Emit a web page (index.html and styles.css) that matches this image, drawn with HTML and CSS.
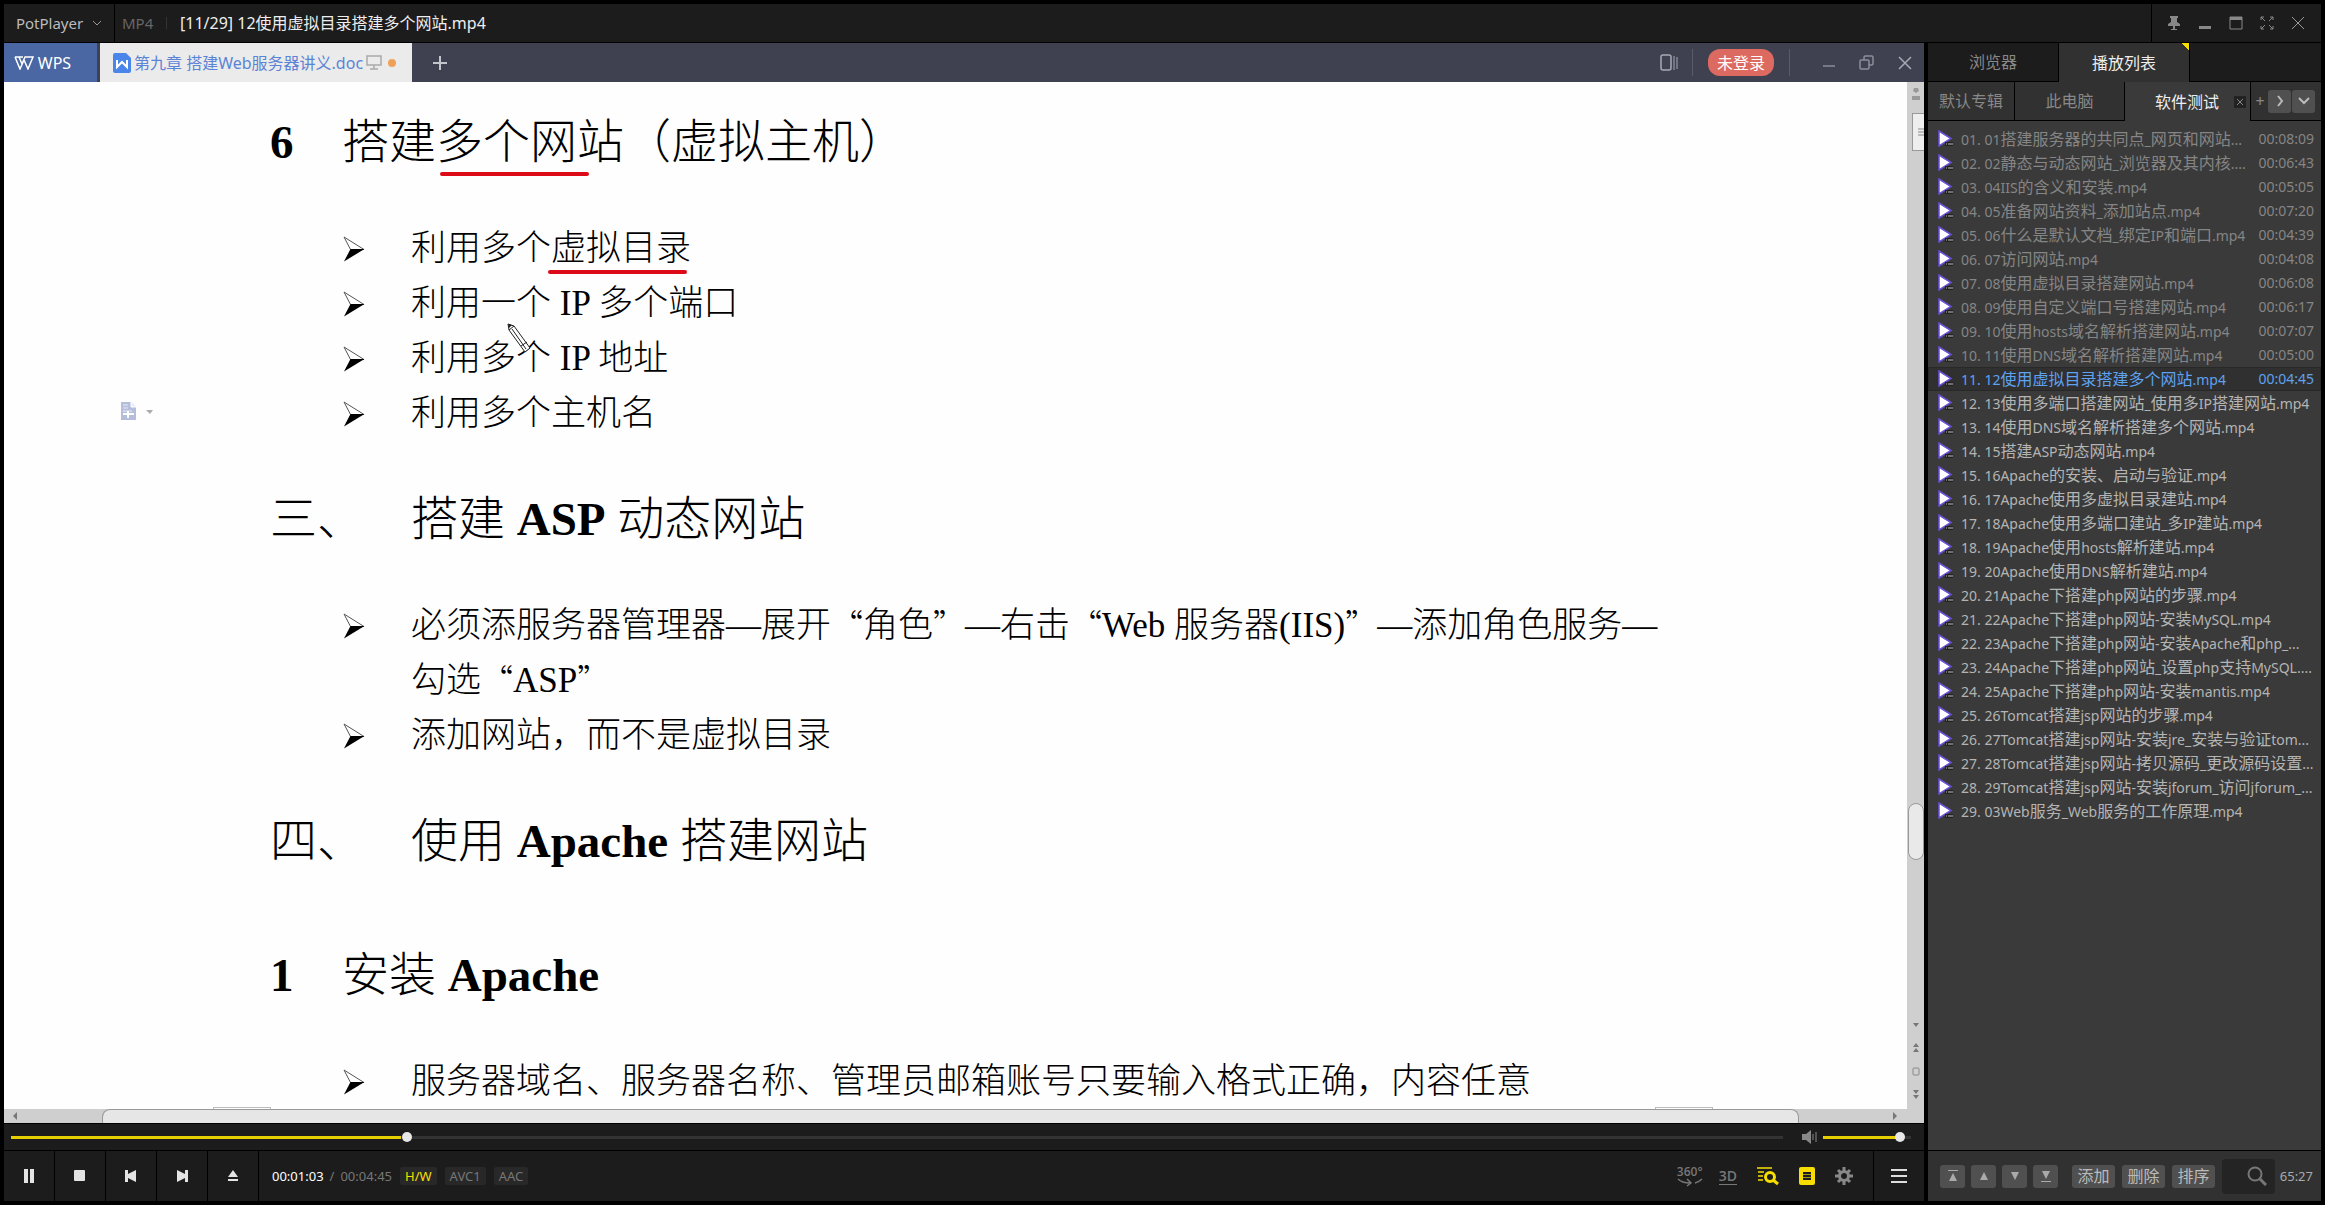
FILE: index.html
```html
<!DOCTYPE html>
<html lang="zh-CN">
<head>
<meta charset="utf-8">
<title>PotPlayer</title>
<link rel="stylesheet" href="styles.css">
</head>
<body>
<svg width="0" height="0" class="defs" aria-hidden="true">
  <symbol id="arrow" viewBox="0 0 22 26"><path d="M1 1 21 13.500H7.500Z" fill="#fff" stroke="#555" stroke-width="1"/><path d="M7.500 13H21.500L1 25.500Z" fill="#000"/></symbol>
  <symbol id="file" viewBox="0 0 18 18"><path d="M2 1 14 8.500 2 16Z" fill="#fff" stroke="#6a4fd8" stroke-width="1.500"/><path d="M8 12h8v4H8z" fill="#222"/><path d="M9 14h1m1 0h1m1-1v2m2-2v2" stroke="#bbb"/></symbol>
</svg>
<div class="player">
  <header class="titlebar">
    <button class="app-menu">PotPlayer <svg width="10" height="7" viewBox="0 0 10 7"><path d="M1 1l4 4 4-4" fill="none" stroke="#999"/></svg></button>
    <span class="format">MP4</span>
    <h1 class="title">[11/29] 12使用虚拟目录搭建多个网站.mp4</h1>
    <div class="window-buttons">
      <button aria-label="置顶"><svg width="14" height="16" viewBox="0 0 14 16"><path d="M3 1h8v2H10v4l3 2v2H8v3h2v1H4v-1h2v-3H1V9l3-2V3H3z" fill="#888"/></svg></button>
      <button aria-label="最小化"><svg width="14" height="16" viewBox="0 0 14 16"><path d="M1 11h12v3H1z" fill="#888"/></svg></button>
      <button aria-label="最大化"><svg width="14" height="16" viewBox="0 0 14 16"><path d="M1 2h12v12H1z" fill="none" stroke="#888"/><path d="M1 2h12v3H1z" fill="#888"/></svg></button>
      <button aria-label="全屏"><svg width="14" height="16" viewBox="0 0 14 16"><path d="M1 5V2h3M10 2h3v3M13 11v3h-3M4 14H1v-3M1 2l4 4M13 2 9 6M13 14l-4-4M1 14l4-4" fill="none" stroke="#888"/></svg></button>
      <button aria-label="关闭"><svg width="14" height="16" viewBox="0 0 14 16"><path d="M1 2l12 12M13 2 1 14" fill="none" stroke="#999"/></svg></button>
    </div>
  </header>

  <main class="video">
    <div class="wps-bar">
      <button class="wps-home"><svg width="20" height="14" viewBox="0 0 20 14"><path d="M1 1h8M1 1l5 12 4-9 4 9 5-12h-8l-3 7M5 1l3 7" fill="none" stroke="#fff" stroke-width="1.500"/></svg>WPS</button>
      <button class="wps-doc"><svg width="18" height="20" viewBox="0 0 18 20"><path d="M2 0h11l5 5v13a2 2 0 0 1-2 2H2a2 2 0 0 1-2-2V2a2 2 0 0 1 2-2z" fill="#4a86ea"/><path d="M4 7v7l5-5 5 5V7" fill="none" stroke="#fff" stroke-width="2"/></svg><span>第九章 搭建Web服务器讲义.doc</span><svg width="16" height="15" viewBox="0 0 16 15"><path d="M1 1h14v9H1zM8 10v4M4 14h8" fill="none" stroke="#aaa" stroke-width="1.500"/></svg><i class="dot"></i></button>
      <button class="wps-add" aria-label="新建"><svg width="16" height="16" viewBox="0 0 16 16"><path d="M8 1v14M1 8h14" stroke="#c4c4cc" stroke-width="2"/></svg></button>
      <div class="wps-tools">
        <button aria-label="面板"><svg width="18" height="18" viewBox="0 0 18 18"><rect x="1" y="1" width="10" height="15" rx="2" fill="none" stroke="#a9a9b3" stroke-width="1.500"/><path d="M14 2v14M17 3v12" stroke="#a9a9b3"/></svg></button>
        <button class="login">未登录</button>
        <button aria-label="最小化"><svg width="14" height="16" viewBox="0 0 14 16"><path d="M1 11h12" stroke="#8d8d98" stroke-width="1.500"/></svg></button>
        <button aria-label="还原"><svg width="16" height="16" viewBox="0 0 16 16"><rect x="1" y="5" width="9" height="9" rx="1" fill="none" stroke="#8d8d98" stroke-width="1.500"/><path d="M5 5V2l1-1h7l1 1v7l-1 1h-3" fill="none" stroke="#8d8d98" stroke-width="1.500"/></svg></button>
        <button aria-label="关闭"><svg width="14" height="14" viewBox="0 0 14 14"><path d="M1 1l12 12M13 1 1 13" stroke="#a9a9b3" stroke-width="1.500"/></svg></button>
      </div>
    </div>
    <div class="doc-view">
      <article class="doc">
        <h2><b class="num">6</b><span>搭建<span class="mark">多个网</span>站（虚拟主机）</span></h2>
        <ul>
          <li><svg><use href="#arrow"/></svg><span>利用多个<span class="mark">虚拟目录</span></span></li>
          <li><svg><use href="#arrow"/></svg><span>利用一个 IP 多个端口</span></li>
          <li><svg><use href="#arrow"/></svg><span>利用多个 IP 地址</span></li>
          <li><svg><use href="#arrow"/></svg><span>利用多个主机名</span></li>
        </ul>
        <h2 class="chapter"><span class="num">三、</span><span>搭建 <b>ASP</b> 动态网站</span></h2>
        <ul>
          <li><svg><use href="#arrow"/></svg><span>必须添服务器管理器—展开<q>“</q>角色<q>”</q>—右击<q>“</q>Web 服务器(IIS)<q>”</q>—添加角色服务—<br>勾选<q>“</q>ASP<q>”</q></span></li>
          <li><svg><use href="#arrow"/></svg><span>添加网站，而不是虚拟目录</span></li>
        </ul>
        <h2 class="chapter wide"><span class="num">四、</span><span>使用 <b>Apache</b> 搭建网站</span></h2>
        <h2><b class="num">1</b><span>安装 <b>Apache</b></span></h2>
        <ul>
          <li><svg><use href="#arrow"/></svg><span>服务器域名、服务器名称、管理员邮箱账号只要输入格式正确，内容任意</span></li>
        </ul>
        <svg class="paste" width="34" height="20" viewBox="0 0 34 20"><path d="M1 1h10l5 5v13H1z" fill="#b4bedb"/><path d="M11 1v5h5" fill="#eef" stroke="#fff"/><path d="M3 4h5M3 7h5M3 10h9" stroke="#e8ecf8"/><path d="M3 13h11M8 10v7" stroke="#fff" stroke-width="2"/><path d="M26 9h7l-3 4z" fill="#aaa"/></svg>
        <svg class="pen" width="26" height="32" viewBox="0 0 26 32"><path d="M2 2l1 6 16 22 5-4L8 4z" fill="#fff" stroke="#222" stroke-width="1"/><path d="M2 2l4 1-3 3z" fill="#222"/><path d="M6 7l14 20M3 8l5-4M15 24l6-4" stroke="#222" fill="none"/></svg>
        <i class="stub left"></i><i class="stub right"></i>
      </article>
      <div class="vscroll">
        <svg width="10" height="14" viewBox="0 0 10 14"><path d="M5 5 2 3 3 0h4l1 3zM1 8h8v4H1z" fill="#999"/></svg>
        <div class="ruler"><svg width="6" height="8" viewBox="0 0 6 8"><path d="M0 1h6M0 4h6M0 7h6" stroke="#888"/></svg></div>
        <div class="vthumb"></div>
        <div class="vnav">
          <svg width="8" height="6" viewBox="0 0 8 6"><path d="M1 1h6L4 5z" fill="#777"/></svg>
          <svg width="8" height="10" viewBox="0 0 8 10"><path d="M1 5h6L4 1zM1 10h6L4 6z" fill="#777"/></svg>
          <svg width="8" height="10" viewBox="0 0 8 10"><rect x="1" y="2" width="6" height="7" rx="1" fill="none" stroke="#888"/></svg>
          <svg width="8" height="10" viewBox="0 0 8 10"><path d="M1 0h6L4 4zM1 5h6L4 9z" fill="#777"/></svg>
        </div>
      </div>
      <div class="hscroll">
        <svg width="6" height="8" viewBox="0 0 6 8"><path d="M5 0v8L1 4z" fill="#777"/></svg>
        <div class="hthumb"></div>
        <svg width="6" height="8" viewBox="0 0 6 8"><path d="M1 0v8l4-4z" fill="#777"/></svg>
      </div>
    </div>
  </main>

  <div class="seekbar">
    <input class="seek" type="range" min="0" max="1000" value="222" aria-label="播放进度">
    <button class="mute" aria-label="静音"><svg width="16" height="14" viewBox="0 0 16 14"><path d="M0 4h4l5-4v14l-5-4H0z" fill="#888"/><path d="M11 4v6M14 2v10" stroke="#888"/></svg></button>
    <input class="volume" type="range" min="0" max="100" value="92" aria-label="音量">
  </div>

  <footer class="controls">
    <div class="transport">
      <button aria-label="暂停"><svg width="12" height="14" viewBox="0 0 12 14"><path d="M1 0h4v14H1zM7 0h4v14H7z"/></svg></button>
      <button aria-label="停止"><svg width="12" height="12" viewBox="0 0 12 12"><rect width="11" height="11" x="0" y="0" rx="1"/></svg></button>
      <button aria-label="上一个"><svg width="12" height="12" viewBox="0 0 12 12"><path d="M0 0h3v4l8-4v12L3 8v4H0z"/></svg></button>
      <button aria-label="下一个"><svg width="12" height="12" viewBox="0 0 12 12"><path d="M12 0H9v4L1 0v12l8-4v4h3z"/></svg></button>
      <button aria-label="打开"><svg width="12" height="12" viewBox="0 0 12 12"><path d="M6 0l5 7H1zM1 9h10v2H1z"/></svg></button>
    </div>
    <div class="time"><span class="now">00:01:03</span><span>/</span><span>00:04:45</span></div>
    <div class="codecs"><button class="on">H/W</button><button>AVC1</button><button>AAC</button></div>
    <div class="tools">
      <button class="view360" aria-label="360 度"><span>360°</span><svg width="26" height="9" viewBox="0 0 26 9"><path d="M1 1c3 3 6 4 12 4M10 1l4 4-4 3M25 1c-2 2-4 3-7 4" fill="none" stroke="#777" stroke-width="1.500"/></svg></button>
      <button class="view3d">3D</button>
      <button aria-label="列表搜索"><svg width="22" height="20" viewBox="0 0 22 20"><path d="M0 2h15M1 6h6M1 10h5M1 14h5" stroke="#f8de00" stroke-width="1.500"/><circle cx="13" cy="11" r="4.500" fill="none" stroke="#f8de00" stroke-width="3"/><path d="M16 14l5 4" stroke="#f8de00" stroke-width="3"/></svg></button>
      <button aria-label="播放列表"><svg width="16" height="18" viewBox="0 0 16 18"><rect width="16" height="18" rx="2" fill="#f8de00"/><path d="M4 5h8v8H4z" fill="#1c1c1c"/><path d="M4 7.500h8M4 10.500h8" stroke="#a89700" stroke-width="1"/></svg></button>
      <button aria-label="设置"><svg width="18" height="18" viewBox="0 0 18 18"><circle cx="9" cy="9" r="4.500" fill="none" stroke="#888" stroke-width="3"/><path d="M9 0v4M9 14v4M0 9h4M14 9h4M3 3l3 3M12 12l3 3M15 3l-3 3M6 12l-3 3" stroke="#888" stroke-width="3"/></svg></button>
    </div>
    <button class="menu" aria-label="菜单"><svg width="16" height="14" viewBox="0 0 16 14"><path d="M0 1h16M0 7h16M0 13h16" stroke="#ddd" stroke-width="2"/></svg></button>
  </footer>

  <aside class="panel">
    <nav class="tabs"><button>浏览器</button><button class="active">播放列表</button></nav>
    <nav class="albums">
      <button class="first">默认专辑</button><button>此电脑</button>
      <button class="active">软件测试<svg width="12" height="12" viewBox="0 0 12 12"><path d="M0 0h12v12H0z" fill="#222"/><path d="M3 3l6 6M9 3 3 9" stroke="#888"/></svg></button>
      <div class="more">
        <button class="plus">+</button>
        <button aria-label="右移"><svg width="10" height="12" viewBox="0 0 10 12"><path d="M3 1l4 5-4 5" fill="none" stroke="#bbb" stroke-width="2"/></svg></button>
        <button aria-label="展开"><svg width="12" height="10" viewBox="0 0 12 10"><path d="M1 2l5 5 5-5" fill="none" stroke="#bbb" stroke-width="2"/></svg></button>
      </div>
    </nav>
    <ol class="list" id="list"></ol>
    <div class="panel-foot">
      <div class="moves">
        <button aria-label="移到顶部"><svg width="12" height="14" viewBox="0 0 12 14"><path d="M1 1h10v1H1zM6 4l4 8H2z"/></svg></button>
        <button aria-label="上移"><svg width="12" height="14" viewBox="0 0 12 14"><path d="M6 3l4 8H2z"/></svg></button>
        <button aria-label="下移"><svg width="12" height="14" viewBox="0 0 12 14"><path d="M6 11l4-8H2z"/></svg></button>
        <button aria-label="移到底部"><svg width="12" height="14" viewBox="0 0 12 14"><path d="M1 12h10v1H1zM6 10l4-8H2z"/></svg></button>
      </div>
      <div class="edits"><button>添加</button><button>删除</button><button>排序</button></div>
      <label class="search"><input type="text" aria-label="搜索"><svg width="20" height="20" viewBox="0 0 20 20"><circle cx="8" cy="8" r="6.500" fill="none" stroke="#777" stroke-width="2"/><path d="M13 13l6 6" stroke="#777" stroke-width="3"/></svg></label>
      <span class="total">65:27</span>
    </div>
  </aside>
</div>
<script src="playlist.js"></script>
</body>
</html>
```
FILE: styles.css
```css
* { box-sizing: border-box; }
body { margin: 0; background: #000; color: #888; font: 14px/20px "Noto Sans", "Noto Sans CJK SC", sans-serif; }
button { margin: 0; padding: 0; border: 0; background: none; color: inherit; font: inherit; display: flex; align-items: center; justify-content: center; }
svg { display: block; flex: none; }
.defs { position: absolute; }
ul, ol { list-style: none; margin: 0; padding: 0; }

.player { height: 100vh; padding: 4px; display: grid; grid-template-columns: minmax(0, 1fr) 393px; grid-template-rows: 38px minmax(0, 1fr) 26px 50px; gap: 1px 4px; }

.titlebar { grid-column: 1 / -1; background: #1c1c1c; display: flex; align-items: center; }
.app-menu { width: 111px; height: 100%; border-right: 1px solid #000; gap: 9px; color: #bbb; font-size: 15px; }
.format { width: 45px; margin-left: 7px; color: #666; border-right: 1px solid #333; font-size: 15px; line-height: 12px; }
.title { margin: 0; padding-left: 13px; flex: 1; color: #eee; font-size: 16px; font-weight: 400; }
.window-buttons { width: 170px; height: 100%; padding: 0 8px 0 6px; border-left: 1px solid #000; display: flex; }
.window-buttons button { flex: 1; }

.video { display: flex; flex-direction: column; min-height: 0; }
.wps-bar { flex: none; height: 39px; background: #3f4050; display: flex; font-size: 15px; }
.wps-home { width: 93px; padding-right: 16px; gap: 4px; background: #4a67a3; color: #fff; font-size: 16px; }
.wps-doc { width: 312px; margin-left: 3px; padding: 0 16px 0 13px; gap: 3px; background: #ebebeb; color: #5b84d6; font-size: 16px; justify-content: flex-start; white-space: nowrap; }
.dot { width: 8px; height: 8px; margin-left: auto; border-radius: 4px; background: #efa15a; }
.wps-add { width: 55px; }
.wps-tools { margin-left: auto; display: flex; align-items: center; }
.wps-tools button { width: 38px; height: 20px; }
.wps-tools button:first-child { margin-right: 4px; }
.wps-tools .login { width: 98px; height: 27px; padding: 0 15px; margin-right: 20px; border: solid #5a5a68; border-width: 0 1px; color: #fff; font-size: 16px; position: relative; z-index: 0; }
.login::before { content: ""; position: absolute; z-index: -1; inset: 0 15px; border-radius: 12px; background: #dc6a60; }

.doc-view { flex: 1; min-height: 0; display: grid; grid-template-columns: minmax(0, 1fr) 17px; grid-template-rows: minmax(0, 1fr) 14px; background: #cfcfcf; }
.doc { position: relative; overflow: hidden; padding: 28px 0 0 266px; background: #fefefe; color: #000; font: 300 35px/55px "Liberation Serif", "Noto Sans CJK SC", serif; white-space: nowrap; }
.doc h2 { margin: 0 0 47px; display: flex; font-size: 47px; line-height: 64px; font-weight: 300; }
.doc h2 b { font-weight: 700; }
.num { width: 72px; }
.chapter .num { width: 141px; }
.doc ul + h2 { margin-top: 46px; }
.doc .wide { margin-bottom: 70px; }
.doc li { display: flex; padding-left: 73px; }
.doc li svg { width: 22px; height: 26px; margin: 15px 46px 0 0; }
.doc q { quotes: none; font-family: "Noto Sans CJK SC", sans-serif; font-size: 32px; line-height: 35px; }
.doc q::before, .doc q::after { content: none; }
.mark { position: relative; }
.mark::after { content: ""; position: absolute; left: -3px; right: 4px; bottom: -6px; height: 4px; border-radius: 2px; background: #dd0a17; }
h2 .mark::after { left: 4px; right: -12px; bottom: -8px; }
.paste { position: absolute; left: 116px; top: 319px; }
.pen { position: absolute; left: 502px; top: 240px; }
.stub { position: absolute; bottom: 0; width: 58px; height: 2px; border: 1px solid #bbb; border-bottom: 0; }
.stub.left { left: 209px; }
.stub.right { right: 194px; }
.vscroll { display: flex; flex-direction: column; align-items: center; padding-top: 6px; }
.ruler { margin: 11px 0 0 5px; width: 12px; height: 38px; border: 1px solid #999; border-right: 0; background: #eee; display: flex; align-items: center; justify-content: flex-end; }
.vthumb { width: 16px; height: 57px; margin: auto 0 0; border: 1px solid #999; border-radius: 8px; background: #e9e9e9; }
.vnav { margin: 162px 0 9px; display: flex; flex-direction: column; gap: 14px; }
.hscroll { grid-column: 1 / -1; display: flex; align-items: center; padding: 0 26px 0 8px; }
.hthumb { flex: 1; align-self: stretch; margin: 0 93px 0 84px; border: 1px solid #999; border-bottom: 0; border-radius: 8px 8px 0 0; background: #e6e6e6; }

.seekbar { background: #1c1c1c; display: flex; align-items: center; padding: 0 13px 0 7px; }
input[type=range] { appearance: none; margin: 0; height: 12px; background: none; }
.seek { flex: 1; --pos: 22%; }
.volume { width: 88px; --pos: 90%; }
input[type=range]::-webkit-slider-runnable-track { height: 3px; background: linear-gradient(90deg, #e6ce00 var(--pos), #333 var(--pos)); }
input[type=range]::-webkit-slider-thumb { appearance: none; width: 10px; height: 10px; margin-top: -4px; border-radius: 5px; background: #e8e8e8; }
.mute { width: 16px; margin: 0 5px 0 19px; }

.controls { background: #1c1c1c; display: flex; align-items: center; font-size: 13px; color: #777; }
.transport { display: flex; align-self: stretch; }
.transport button { width: 51px; border-right: 1px solid #000; }
.transport svg { fill: #e4e4e4; }
.time { display: flex; gap: 6px; margin-left: 13px; }
.now { color: #fff; }
.codecs { display: flex; gap: 8px; margin-left: 8px; }
.codecs button { height: 18px; padding: 0 5px; border-radius: 2px; background: #282828; }
.codecs .on { color: #f8de00; }
.tools { margin-left: auto; display: flex; align-items: center; gap: 20px; padding-right: 20px; }
.view360 { flex-direction: column; font: 600 12px/12px "Open Sans", sans-serif; margin-right: -4px; }
.view3d { font: 600 14px/16px "Open Sans", sans-serif; border-bottom: 1px solid #777; }
.menu { width: 51px; align-self: stretch; border-left: 1px solid #000; }

.panel { grid-column: 2; grid-row: 2 / 5; display: flex; flex-direction: column; background: #3a3a3a; font-size: 16px; min-height: 0; }
.tabs, .albums { flex: none; height: 39px; display: flex; border-bottom: 1px solid #000; background: #1c1c1c; }
.tabs button { width: 131px; border-right: 1px solid #000; }
.tabs .active { background: linear-gradient(225deg, #f8de00 5px, #313131 5px); color: #eee; margin-bottom: -1px; }
.albums { background: #313131; }
.albums > button { width: 110px; border-right: 1px solid #000; }
.albums .first { width: 87px; }
.albums .active { width: 126px; padding: 0 4px 0 30px; justify-content: space-between; background: #3a3a3a; color: #eee; margin-bottom: -1px; white-space: nowrap; }
.more { flex: 1; display: flex; align-items: center; justify-content: flex-end; gap: 1px; padding-right: 6px; }
.more button { width: 23px; height: 23px; border-radius: 3px; background: #505050; }
.more .plus { width: 14px; background: none; }
.list { flex: 1; padding-top: 6px; min-height: 0; overflow: hidden; color: #b4b4b4; line-height: 22px; }
.list li { height: 24px; border: 1px solid transparent; display: flex; align-items: center; padding: 0 6px 0 8px; white-space: nowrap; }
.list svg { width: 18px; height: 18px; margin-right: 6px; }
.list .latin { font-size: 14px; }
.list time { margin-left: auto; font-size: 14px; }
.list .played { color: #858585; }
.list .playing { color: #5ea2f0; background: #303030; border-color: #282828; }

.panel-foot { height: 51px; flex: none; border-top: 1px solid #000; background: #313131; display: flex; align-items: center; padding: 0 8px 0 12px; }
.moves, .edits { display: flex; gap: 6px; }
.edits { gap: 7px; margin: 0 7px 0 14px; }
.panel-foot button { width: 25px; height: 23px; border-radius: 3px; background: #505050; color: #bbb; }
.panel-foot .edits button { width: 43px; }
.moves svg { fill: #aaa; }
.search { width: 53px; height: 35px; border-radius: 4px; background: #242424; display: flex; align-items: center; padding-right: 8px; }
.search input { width: 25px; height: 100%; border: 0; padding: 0; background: none; color: #ccc; font: inherit; }
.total { margin-left: auto; font-size: 13px; color: #aaa; }
```
FILE: playlist.js
```js
const tracks = [
  ["01搭建服务器的共同点_网页和网站...", "00:08:09"],
  ["02静态与动态网站_浏览器及其内核....", "00:06:43"],
  ["04IIS的含义和安装.mp4", "00:05:05"],
  ["05准备网站资料_添加站点.mp4", "00:07:20"],
  ["06什么是默认文档_绑定IP和端口.mp4", "00:04:39"],
  ["07访问网站.mp4", "00:04:08"],
  ["08使用虚拟目录搭建网站.mp4", "00:06:08"],
  ["09使用自定义端口号搭建网站.mp4", "00:06:17"],
  ["10使用hosts域名解析搭建网站.mp4", "00:07:07"],
  ["11使用DNS域名解析搭建网站.mp4", "00:05:00"],
  ["12使用虚拟目录搭建多个网站.mp4", "00:04:45"],
  ["13使用多端口搭建网站_使用多IP搭建网站.mp4"],
  ["14使用DNS域名解析搭建多个网站.mp4"],
  ["15搭建ASP动态网站.mp4"],
  ["16Apache的安装、启动与验证.mp4"],
  ["17Apache使用多虚拟目录建站.mp4"],
  ["18Apache使用多端口建站_多IP建站.mp4"],
  ["19Apache使用hosts解析建站.mp4"],
  ["20Apache使用DNS解析建站.mp4"],
  ["21Apache下搭建php网站的步骤.mp4"],
  ["22Apache下搭建php网站-安装MySQL.mp4"],
  ["23Apache下搭建php网站-安装Apache和php_..."],
  ["24Apache下搭建php网站_设置php支持MySQL...."],
  ["25Apache下搭建php网站-安装mantis.mp4"],
  ["26Tomcat搭建jsp网站的步骤.mp4"],
  ["27Tomcat搭建jsp网站-安装jre_安装与验证tom..."],
  ["28Tomcat搭建jsp网站-拷贝源码_更改源码设置..."],
  ["29Tomcat搭建jsp网站-安装jforum_访问jforum_..."],
  ["03Web服务_Web服务的工作原理.mp4"]
];
const current = 10;

// Latin runs are set one step smaller than the Chinese text.
const mixed = text => text.replace(/[\x20-\x7e]+/g, run => `<span class="latin">${run}</span>`);

document.getElementById("list").innerHTML = tracks.map(([name, length], i) => {
  const state = i < current ? "played" : i === current ? "playing" : "";
  const label = String(i + 1).padStart(2, "0") + ". " + name;
  return `<li class="${state}"><svg><use href="#file"/></svg><span>${mixed(label)}</span>${length ? `<time>${length}</time>` : ""}</li>`;
}).join("");
```
